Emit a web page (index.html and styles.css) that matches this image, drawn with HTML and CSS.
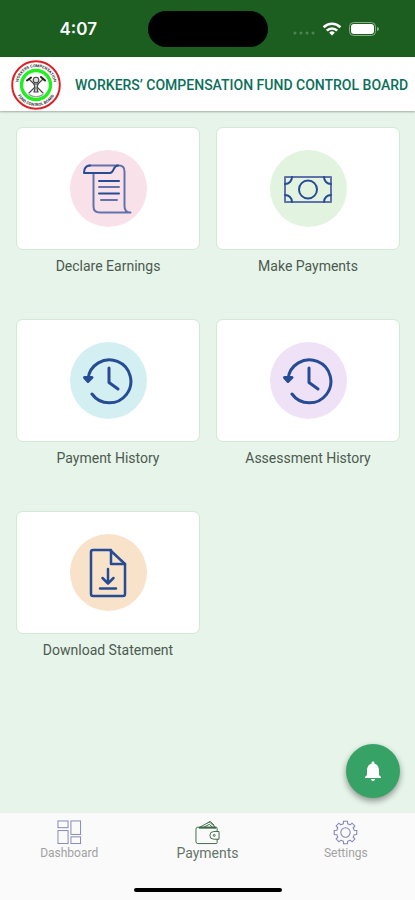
FILE: index.html
```html
<!DOCTYPE html>
<html lang="en">
<head>
    <meta charset="UTF-8">
    <meta name="viewport" content="width=device-width, initial-scale=1.0">
    <title>Workers' Compensation Fund Control Board</title>
    <link rel="stylesheet" href="styles.css">
</head>
<body>
    <div class="status-bar">
        <span class="time">4:07</span>
        <div class="island"></div>
        <div class="status-icons">
            <svg width="22" height="6" viewBox="0 0 22 6" fill="#4c8550">
                <circle cx="2" cy="3" r="1.5"/><circle cx="8" cy="3" r="1.5"/><circle cx="14" cy="3" r="1.5"/><circle cx="20" cy="3" r="1.5"/>
            </svg>
            <svg width="20" height="14" viewBox="0 0 20 14" fill="none" stroke="#fff" stroke-width="2.6">
                <path d="M1.6 5.2a12 12 0 0 1 16.8 0"/>
                <path d="M4.8 8.6a7.4 7.4 0 0 1 10.4 0"/>
                <path d="M10 13.6l-2.8-2.9a4 4 0 0 1 5.6 0z" fill="#fff" stroke="none"/>
            </svg>
            <svg width="31" height="14" viewBox="0 0 31 14">
                <rect x="0.5" y="0.5" width="26" height="13" rx="4" fill="none" stroke="#86ad88"/>
                <rect x="2" y="2" width="23" height="10" rx="3" fill="#fff"/>
                <path d="M28 5v4c1.4-.4 2-1.1 2-2s-.6-1.6-2-2z" fill="#86ad88"/>
            </svg>
        </div>
    </div>

    <header class="header">
        <svg class="logo" viewBox="0 0 50 50" role="img" aria-label="Board logo">
            <circle cx="25" cy="25" r="23.8" fill="#fff" stroke="#dd2025" stroke-width="2"/>
            <circle cx="25" cy="25" r="14.5" fill="#fff" stroke="#22ee22" stroke-width="3.4"/>
            <path id="ring-top" d="M7 25a18 18 0 0 1 36 0" fill="none"/>
            <path id="ring-bottom" d="M4.6 30a21 21 0 0 0 40.8 0" fill="none"/>
            <text class="logo-text"><textPath href="#ring-top" startOffset="50%">WORKERS COMPENSATION</textPath></text>
            <text class="logo-text"><textPath href="#ring-bottom" startOffset="50%">FUND CONTROL BOARD</textPath></text>
            <g fill="none" stroke="#444" stroke-width="1.1" stroke-linecap="round">
                <path d="M18 19l14 14M32 19L18 33"/>
                <path d="M16 20.500l4-3M30 17l4 3.500" stroke-width="2" stroke="#222"/>
                <circle cx="25" cy="20" r="2.8" fill="#ddd"/>
                <path d="M23 24h4l-1 4 1 4h-4l1-4z" fill="#ccc"/>
                <path d="M18 34.500c4 3 10 3 14 0" stroke="#999"/>
            </g>
        </svg>
        <h1>WORKERS’ COMPENSATION FUND CONTROL BOARD</h1>
    </header>

    <main class="content">
        <div class="grid">
            <button class="tile">
                <span class="card">
                    <span class="circle pink">
                        <svg viewBox="0 0 52 52">
                            <path d="M7 2.500h30c4 0 5.500 3 5.500 6V43c0 4 2 6.500 6 6.500H18c-4 0-6.500-2-6.500-6V10" class="thin"/>
                            <path d="M36 2.500c-5 0-4 7.500-8 7.500H2c0-4 1-7.500 6-7.500"/>
                            <path d="M17 18h20M17 30.500h20"/>
                            <path d="M17 24h20M19 37h16" class="thin"/>
                        </svg>
                    </span>
                </span>
                <span class="label">Declare Earnings</span>
            </button>
            <button class="tile">
                <span class="card">
                    <span class="circle green">
                        <svg viewBox="0 0 52 52">
                            <path d="M3 14h46v25H3z" class="thin"/>
                            <circle cx="26" cy="26.5" r="9"/>
                            <path d="M10 14c0 4-3 7-7 7M42 14c0 4 3 7 7 7M3 32c4 0 7 3 7 7M49 32c-4 0-7 3-7 7"/>
                        </svg>
                    </span>
                </span>
                <span class="label">Make Payments</span>
            </button>
            <button class="tile">
                <span class="card">
                    <span class="circle blue">
                        <svg viewBox="0 0 52 52" class="bold">
                            <path d="M6 24A21.5 21.5 0 1 1 10 39"/>
                            <path d="M2.500 22.500L6 26.500l4-4z"/>
                            <path d="M27 13v14.500l9 6.500"/>
                        </svg>
                    </span>
                </span>
                <span class="label">Payment History</span>
            </button>
            <button class="tile">
                <span class="card">
                    <span class="circle purple">
                        <svg viewBox="0 0 52 52" class="bold">
                            <path d="M6 24A21.5 21.5 0 1 1 10 39"/>
                            <path d="M2.500 22.500L6 26.500l4-4z"/>
                            <path d="M27 13v14.500l9 6.500"/>
                        </svg>
                    </span>
                </span>
                <span class="label">Assessment History</span>
            </button>
            <button class="tile">
                <span class="card">
                    <span class="circle orange">
                        <svg viewBox="0 0 52 52" class="doc">
                            <path d="M11 3h17l15 14v30a2 2 0 0 1-2 2H11a2 2 0 0 1-2-2V5a2 2 0 0 1 2-2z"/>
                            <path d="M29 3v14h14"/>
                            <path d="M26 22v14M20.500 31l5.500 5.500 5.500-5.500M18 41.500h16"/>
                        </svg>
                    </span>
                </span>
                <span class="label">Download Statement</span>
            </button>
        </div>
        <button class="fab" aria-label="Notifications">
            <svg width="24" height="24" viewBox="0 0 24 24" fill="#fff">
                <path d="M12 22c1.100 0 2-.9 2-2h-4c0 1.100.9 2 2 2zm6-6v-5c0-3.070-1.640-5.640-4.500-6.320V4c0-.83-.67-1.500-1.500-1.500s-1.500.67-1.500 1.500v.68C7.630 5.360 6 7.920 6 11v5l-2 2v1h16v-1l-2-2z"/>
            </svg>
        </button>
    </main>

    <nav class="tab-bar">
        <div class="tabs">
            <a href="#dashboard" class="tab">
                <svg viewBox="0 0 26 26">
                    <rect x="1" y="1" width="10.5" height="7"/>
                    <rect x="1" y="11" width="10.5" height="13.5"/>
                    <rect x="14.5" y="1" width="10" height="14"/>
                    <rect x="14.5" y="17.5" width="10" height="7"/>
                </svg>
                <span>Dashboard</span>
            </a>
            <a href="#payments" class="tab active">
                <svg viewBox="0 0 26 26">
                    <path d="M23 12V8.500a1 1 0 0 0-1-1H3a2 2 0 0 0-2 2v13a2 2 0 0 0 2 2h19a1 1 0 0 0 1-1V20"/>
                    <path d="M25 12h-5.500a4 4 0 0 0 0 8H25z"/>
                    <circle cx="20" cy="16" r="1"/>
                    <path d="M5 7.500L15 2l6 5.500M9 7.500l6-3 3 3M13 3l3-1.500 4 4"/>
                    <path d="M4 8h18" stroke-width="2"/>
                </svg>
                <span>Payments</span>
            </a>
            <a href="#settings" class="tab">
                <svg viewBox="-12 -12 24 24">
                    <path d="M-2.080-8.340L-1.910-10.830H1.910L2.080-8.340A8.600 8.600 0 0 1 4.430-7.370L6.310-9.010 9.010-6.310 7.370-4.430A8.600 8.600 0 0 1 8.340-2.080L10.830-1.910V1.910L8.340 2.080A8.600 8.600 0 0 1 7.370 4.430L9.010 6.310 6.310 9.010 4.430 7.370A8.600 8.600 0 0 1 2.080 8.340L1.910 10.830H-1.910L-2.080 8.340A8.600 8.600 0 0 1-4.430 7.370L-6.310 9.010-9.010 6.310-7.370 4.430A8.600 8.600 0 0 1-8.340 2.080L-10.830 1.910V-1.910L-8.340-2.080A8.600 8.600 0 0 1-7.370-4.430L-9.010-6.310-6.310-9.010-4.430-7.370A8.600 8.600 0 0 1-2.080-8.340z"/>
                    <circle cx="0" cy="0" r="4.5"/>
                </svg>
                <span>Settings</span>
            </a>
        </div>
        <div class="home-indicator"></div>
    </nav>
</body>
</html>
```

FILE: styles.css
```css
* {
    box-sizing: border-box;
}
body {
    margin: 0;
    min-height: 100vh;
    display: flex;
    flex-direction: column;
    font-family: Roboto, sans-serif;
    background-color: #e6f4e9;
}
button {
    font: inherit;
    border: none;
    padding: 0;
    background: none;
    cursor: pointer;
}

/* Status bar */
.status-bar {
    display: grid;
    grid-template-columns: 1fr 120px 1fr;
    align-items: center;
    height: 57px;
    background-color: #1b5e20;
}
.time {
    padding-left: 9px;
    text-align: center;
    font-family: Inter, sans-serif;
    font-size: 17px;
    font-weight: 600;
    color: #fff;
}
.island {
    height: 36px;
    border-radius: 18px;
    background-color: #000;
}
.status-icons {
    display: flex;
    align-items: center;
    justify-content: flex-end;
    gap: 7px;
    padding-right: 35px;
}
.status-icons svg:first-child {
    margin-top: 9px;
}

/* Header */
.header {
    position: relative;
    display: flex;
    align-items: center;
    gap: 14px;
    height: 54px;
    padding: 2px 8px 0 11px;
    background-color: #fff;
    box-shadow: 0 1px 2px rgba(0, 0, 0, 0.3);
}
.logo {
    flex: none;
    width: 50px;
    height: 50px;
}
.logo-text {
    font-size: 4px;
    font-weight: 700;
    fill: #333;
    text-anchor: middle;
}
.header h1 {
    margin: 0;
    font-size: 14px;
    font-weight: 500;
    color: #0b705a;
    white-space: nowrap;
}

/* Tiles */
.content {
    flex: 1;
    position: relative;
    padding: 16px 15px 16px 16px;
}
.grid {
    display: grid;
    grid-template-columns: 1fr 1fr;
    gap: 43px 16px;
}
.tile {
    display: flex;
    flex-direction: column;
    gap: 6px;
}
.card {
    display: flex;
    align-items: center;
    justify-content: center;
    width: 100%;
    height: 123px;
    border: 1px solid #d3e8d7;
    border-radius: 7px;
    background-color: #fff;
}
.circle {
    display: flex;
    align-items: center;
    justify-content: center;
    width: 77px;
    height: 77px;
    border-radius: 50%;
}
.circle svg {
    width: 52px;
    height: 52px;
    fill: none;
    stroke: #264c95;
    stroke-width: 2;
    stroke-linejoin: round;
    stroke-linecap: round;
}
.circle .thin {
    stroke: #6273ab;
}
.circle .bold {
    stroke-width: 3;
}
.circle .doc {
    stroke-width: 2.5;
}
.pink {
    background-color: #f8e1e9;
}
.green {
    background-color: #e2f4df;
}
.blue {
    background-color: #d4eff2;
}
.purple {
    background-color: #efe2f6;
}
.orange {
    background-color: #f9e2ca;
}
.label {
    width: 100%;
    text-align: center;
    font-size: 14px;
    line-height: 20px;
    color: #4d5a50;
}
.fab {
    position: absolute;
    right: 15px;
    bottom: 15px;
    display: flex;
    align-items: center;
    justify-content: center;
    width: 54px;
    height: 54px;
    border-radius: 50%;
    background-color: #36a265;
    box-shadow: 0 3px 6px rgba(0, 0, 0, 0.4);
}

/* Bottom navigation */
.tab-bar {
    display: flex;
    flex-direction: column;
    align-items: center;
    justify-content: space-between;
    height: 87px;
    padding: 7px 0 8px;
    background-color: #fafafa;
}
.tabs {
    display: flex;
    width: 100%;
}
.tab {
    flex: 1;
    display: flex;
    flex-direction: column;
    align-items: center;
    font-size: 12px;
    line-height: 16px;
    color: #a2a2a2;
    text-decoration: none;
}
.tab svg {
    width: 25px;
    height: 25px;
    fill: none;
    stroke: #8286b5;
    stroke-width: 1;
}
.tab.active {
    font-size: 14px;
    color: #65756a;
}
.tab.active svg {
    stroke: #3c6a48;
}
.home-indicator {
    width: 148px;
    height: 4px;
    border-radius: 2px;
    background-color: #000;
}
```
